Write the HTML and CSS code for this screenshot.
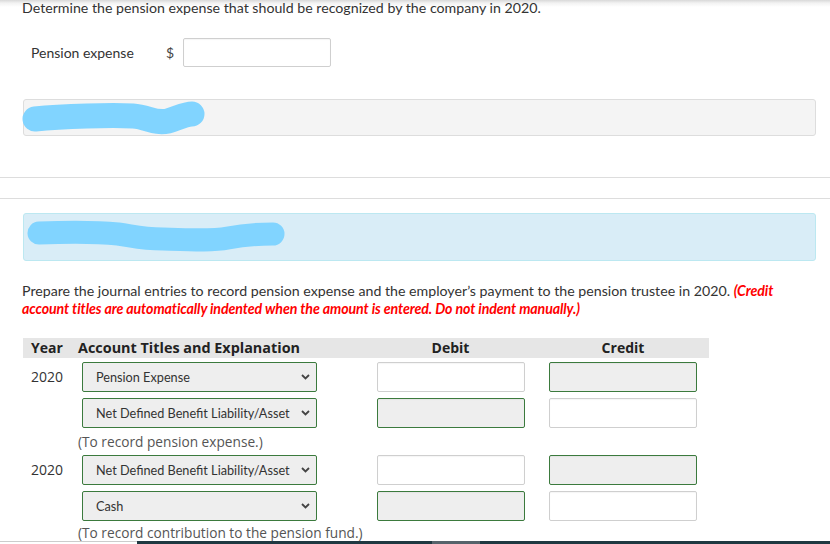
FILE: index.html
```html
<!DOCTYPE html>
<html>
<head>
<meta charset="utf-8">
<link rel="stylesheet" href="styles.css">
</head>
<body>
<div class="page">
  <p class="q-text">Determine the pension expense that should be recognized by the company in 2020.</p>
  <div class="answer-row">
    <span class="answer-label">Pension expense</span>
    <span class="dollar">$</span>
    <span class="text-input wide"></span>
  </div>

  <div class="box grey-box">
    <svg class="scribble" width="190" height="36" viewBox="0 0 190 36">
      <path d="M12 20 C 40 17, 90 16, 110 17 C 125 18, 132 25, 145 22 C 155 19, 162 15, 169 15" fill="none" stroke="#81d4ff" stroke-width="25" stroke-linecap="round" stroke-linejoin="round"/>
    </svg>
  </div>

  <div class="divider-gap"></div>

  <div class="box blue-box">
    <svg class="scribble" width="270" height="47" viewBox="0 0 270 47">
      <path d="M16 20 C 45 19, 75 19, 95 21 C 110 23, 118 26, 140 26 C 170 27, 190 28, 205 25 C 220 22, 238 21, 250 21" fill="none" stroke="#81d4ff" stroke-width="23" stroke-linecap="round" stroke-linejoin="round"/>
    </svg>
  </div>

  <p class="instructions">Prepare the journal entries to record pension expense and the employer’s payment to the pension trustee in 2020. <em class="warn">(Credit account titles are automatically indented when the amount is entered. Do not indent manually.)</em></p>

  <div class="journal">
    <div class="jhead year">Year</div>
    <div class="jhead">Account Titles and Explanation</div>
    <div class="jhead center">Debit</div>
    <div class="jhead center">Credit</div>

    <div class="year-cell">2020</div>
    <div class="acct"><div class="select"><span>Pension Expense</span><svg class="chev" width="9" height="6" viewBox="0 0 9 6"><path d="M1 1 L4.5 4.5 L8 1" fill="none" stroke="#444" stroke-width="1.8"/></svg></div></div>
    <div class="amt"><span class="text-input"></span></div>
    <div class="amt"><span class="text-input filled"></span></div>

    <div class="year-cell"></div>
    <div class="acct"><div class="select"><span>Net Defined Benefit Liability/Asset</span><svg class="chev" width="9" height="6" viewBox="0 0 9 6"><path d="M1 1 L4.5 4.5 L8 1" fill="none" stroke="#444" stroke-width="1.8"/></svg></div></div>
    <div class="amt"><span class="text-input filled"></span></div>
    <div class="amt"><span class="text-input"></span></div>

    <div class="year-cell"></div>
    <div class="explain">(To record pension expense.)</div>

    <div class="year-cell">2020</div>
    <div class="acct"><div class="select"><span>Net Defined Benefit Liability/Asset</span><svg class="chev" width="9" height="6" viewBox="0 0 9 6"><path d="M1 1 L4.5 4.5 L8 1" fill="none" stroke="#444" stroke-width="1.8"/></svg></div></div>
    <div class="amt"><span class="text-input"></span></div>
    <div class="amt"><span class="text-input filled"></span></div>

    <div class="year-cell"></div>
    <div class="acct"><div class="select"><span>Cash</span><svg class="chev" width="9" height="6" viewBox="0 0 9 6"><path d="M1 1 L4.5 4.5 L8 1" fill="none" stroke="#444" stroke-width="1.8"/></svg></div></div>
    <div class="amt"><span class="text-input filled"></span></div>
    <div class="amt"><span class="text-input"></span></div>

    <div class="year-cell"></div>
    <div class="explain">(To record contribution to the pension fund.)</div>
  </div>
</div>
<div class="bottom-bar">
  <div class="bar-left"></div>
  <div class="bar-dark"><div class="bar-thumb"></div></div>
</div>
</body>
</html>
```

FILE: styles.css
```css
html, body {
  margin: 0;
  padding: 0;
  background: #fff;
}
body {
  font-family: Lato, "Liberation Sans", sans-serif;
  font-size: 14.2px;
  color: #333;
  overflow: hidden;
  height: 544px;
}
.page {
  background: linear-gradient(#d8d8d8 0, #f2f2f2 3px, #fff 7px) no-repeat;
  background-size: 100% 8px;
  height: 544px;
}
.q-text {
  margin: 0;
  padding: 0 0 0 22px;
  line-height: 16px;
}
.answer-row {
  display: flex;
  align-items: center;
  margin-top: 22px;
  padding-left: 31px;
  height: 29px;
  font-size: 14px;
}
.answer-label {
  width: 135px;
}
.dollar {
  width: 17px;
  color: #444;
}
.text-input {
  display: block;
  box-sizing: border-box;
  width: 148px;
  height: 30px;
  border: 1px solid #cfcfcf;
  border-radius: 2px;
  background: #fff;
  box-shadow: inset 0 1px 1px rgba(0,0,0,0.04);
}
.text-input.wide {
  width: 148px;
  height: 29px;
}
.text-input.filled {
  background: #eeeeee;
  border-color: #3b7a3d;
}
.box {
  box-sizing: border-box;
  margin-left: 23px;
  width: 793px;
  border-radius: 3px;
}
.scribble {
  display: block;
  overflow: visible;
  margin-left: -1px;
}
.grey-box {
  margin-top: 32px;
  height: 37px;
  background: #f4f4f4;
  border: 1px solid #dddddd;
}
.grey-box .scribble {
  margin-top: -1px;
}
.divider-gap {
  margin-top: 41px;
  height: 20px;
  border-top: 1px solid #dddddd;
  border-bottom: 1px solid #dddddd;
}
.blue-box {
  margin-top: 14px;
  height: 48px;
  background: #d9edf7;
  border: 1px solid #bce8f1;
}
.blue-box .scribble {
  margin-top: -1px;
}
.instructions {
  margin: 21px 0 0 0;
  padding: 0 40px 0 22px;
  line-height: 18px;
}
.warn {
  color: #ff0000;
  font-weight: bold;
  font-style: italic;
  letter-spacing: -0.1px;
}
.journal {
  margin: 20px 0 0 23px;
  width: 686px;
  display: grid;
  grid-template-columns: 55px 286px 173px 172px;
  grid-template-rows: 20px 34px 36px 27px 30px 36px 24px;
  font-family: "Open Sans", "DejaVu Sans", sans-serif;
}
.jhead {
  background: #e6e6e6;
  height: 20px;
  line-height: 20px;
  font-weight: bold;
  font-size: 14.4px;
  color: #222;
}
.jhead.year {
  padding-left: 8px;
  font-size: 14px;
}
.jhead.center {
  text-align: center;
  font-size: 14px;
}
.year-cell {
  align-self: end;
  height: 30px;
  padding-left: 8px;
  line-height: 30px;
  font-size: 14px;
  color: #333;
}
.acct {
  align-self: end;
  padding-left: 4px;
}
.select {
  box-sizing: border-box;
  width: 235px;
  height: 30px;
  border: 1px solid #3b7a3d;
  border-radius: 2px;
  background: #eeeeee;
  display: flex;
  align-items: center;
  justify-content: space-between;
  padding: 0 6px 0 13px;
  font-family: Lato, "Liberation Sans", sans-serif;
  font-size: 12.7px;
  color: #333;
}
.chev {
  display: block;
  flex: none;
}
.amt {
  align-self: end;
  display: flex;
  justify-content: center;
}
.explain {
  grid-column: 2 / 5;
  align-self: center;
  font-size: 13.7px;
  color: #555;
  line-height: 20px;
}
.bottom-bar {
  position: fixed;
  left: 0;
  right: 0;
  bottom: 0;
  height: 3px;
  display: flex;
}
.bar-left {
  width: 137px;
  border-top: 1px solid #cccccc;
}
.bar-dark {
  flex: 1;
  background: #1f3841;
  position: relative;
}
.bar-thumb {
  position: absolute;
  left: 295px;
  top: 0;
  width: 48px;
  height: 3px;
  background: #56636b;
}
```
